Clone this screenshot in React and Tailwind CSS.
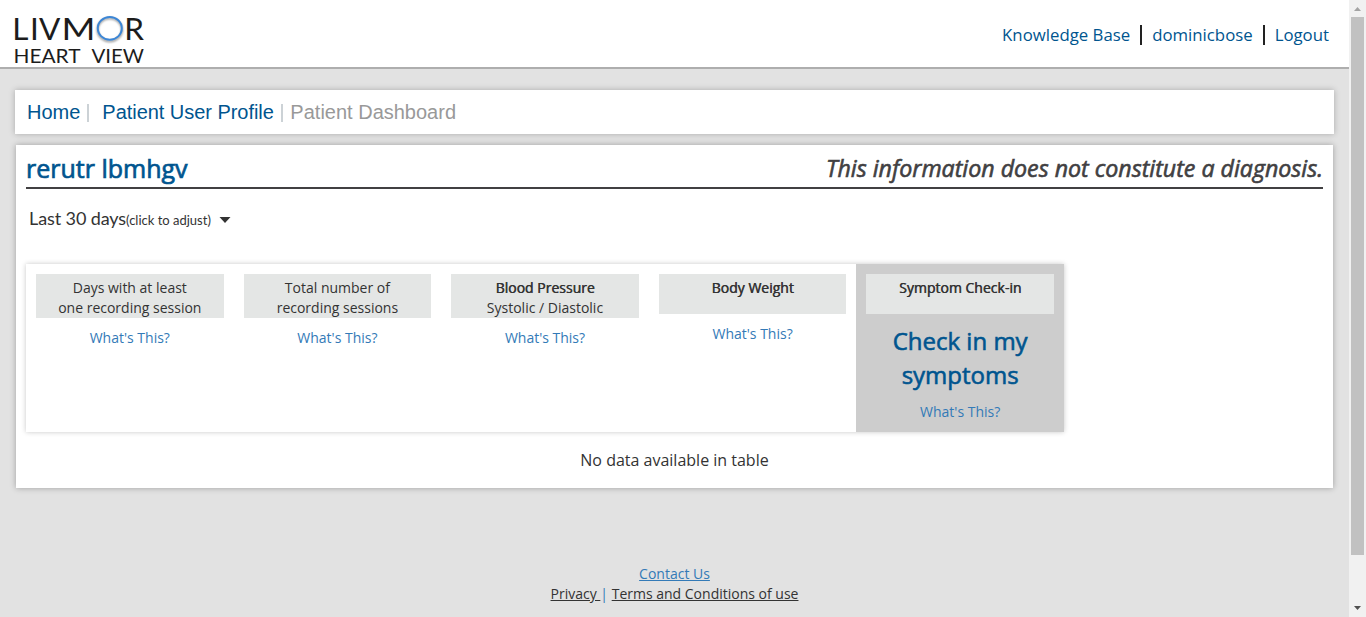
const columns = [
  { lines: ['Days with at least', 'one recording session'] },
  { lines: ['Total number of', 'recording sessions'] },
  { title: 'Blood Pressure', lines: ['Systolic / Diastolic'] },
  { title: 'Body Weight', lines: [], short: true },
  { title: 'Symptom Check-in', lines: [], short: true, action: true },
];

function Logo() {
  return (
    <svg width="140" height="67" viewBox="12 0 140 67" role="img" aria-label="Livmor Heart View">
      <defs>
        <filter id="soft" x="-20%" y="-20%" width="140%" height="140%">
          <feGaussianBlur stdDeviation="0.8" />
        </filter>
      </defs>
      <g fill="#1c1c1c" fontFamily="Lato, sans-serif">
        <text x="12.300 29.900 39" y="40.300" fontSize="31.500">LIV</text>
        <text x="61.500" y="40.300" fontSize="31.500" textLength="34" lengthAdjust="spacingAndGlyphs">M</text>
        <text x="124.300" y="40.300" fontSize="31.500">R</text>
        <text x="13.500" y="63" fontSize="19.500" textLength="67" lengthAdjust="spacingAndGlyphs">HEART</text>
        <text x="91.500" y="63" fontSize="19.500" textLength="52.500" lengthAdjust="spacingAndGlyphs">VIEW</text>
      </g>
      <ellipse cx="109.800" cy="29.800" rx="12.200" ry="11.500" fill="none" stroke="#888" strokeWidth="1.8" filter="url(#soft)" />
      <ellipse cx="109.800" cy="28.300" rx="12" ry="11.400" fill="none" stroke="#3b86d6" strokeWidth="2" />
    </svg>
  );
}

function Column({ title, lines, short, action }) {
  return (
    <div className={action ? 'flex-1 bg-[#cdcdcd] p-[10px]' : 'flex-1 p-[10px]'}>
      <div className={short ? 'h-10 bg-[#e4e6e5] pt-1' : 'h-11 bg-[#e4e6e5] pt-1'}>
        {title && <div className="[text-shadow:0.5px_0_0_#333]">{title}</div>}
        {lines.map((l) => (
          <div key={l}>{l}</div>
        ))}
      </div>
      {action && (
        <div className="mt-[10px] text-2xl leading-[34px] text-[#00558f] [-webkit-text-stroke:0.6px_#00558f]">
          Check in my
          <br />
          symptoms
        </div>
      )}
      <a className="mt-[10px] block text-[#337ab7]">What's This?</a>
    </div>
  );
}

export default function App() {
  return (
    <div className="flex h-[617px] w-[1366px] overflow-hidden bg-[#e2e2e2] font-['Open_Sans',sans-serif] text-sm leading-5 text-[#333]">
      <div className="w-[1349px]">
        <header className="flex h-[69px] justify-between border-b-2 border-[#aeaeae] bg-white pr-5 pl-3">
          <Logo />
          <nav className="flex pt-[25px] text-[16.8px] leading-5 text-[#00558f]">
            <a className="mr-[10px]">Knowledge Base</a>
            <a className="h-5 border-l-2 border-[#222] pr-[10px] pl-[10px]">dominicbose</a>
            <a className="h-5 border-l-2 border-[#222] pl-[10px]">Logout</a>
          </nav>
        </header>

        <nav className="mt-[21px] ml-[15px] flex h-11 w-[1319px] items-center bg-white pl-3 font-['Liberation_Sans',sans-serif] text-xl leading-5 text-[#00558f] shadow-[0_0_6px_rgba(0,0,0,0.25)]">
          <a>Home</a>
          <span className="mt-0.5 mr-3 ml-[7px] h-[18px] w-0.5 bg-[#ccd2d6]" />
          <a className="ml-px tracking-[-0.04px]">Patient User Profile</a>
          <span className="mt-0.5 mr-[7.5px] ml-[7px] h-[18px] w-0.5 bg-[#ccd2d6]" />
          <span className="text-[#999]">Patient Dashboard</span>
        </nav>

        <main className="mt-[11px] ml-4 h-[343px] w-[1317px] bg-white px-[10px] shadow-[0_0_6px_rgba(0,0,0,0.3)]">
          <div className="flex h-11 justify-between border-b-2 border-[#414042]">
            <h1 className="pt-[7px] text-[25px] leading-8 text-[#00558f] [-webkit-text-stroke:0.7px_#00558f]">rerutr lbmhgv</h1>
            <div className="pt-2 text-[23.2px] leading-[30px] text-[#414042] italic [-webkit-text-stroke:0.6px_#414042]">
              This information does not constitute a diagnosis.
            </div>
          </div>
          <div className="flex h-[75px] items-baseline pt-[17px] pl-[3px] font-[Lato,sans-serif]">
            <span className="text-lg leading-6 tracking-[-0.1px]">Last 30 days</span>
            <span className="text-[13px]">(click to adjust)</span>
            <svg className="ml-[8px] self-start pt-[11px]" width="12" height="17" viewBox="0 0 12 6">
              <path d="M0.5 0H11.5L6 6Z" fill="#333" />
            </svg>
          </div>
          <section className="flex h-[168px] w-[1038px] text-center shadow-[0_0_5px_rgba(0,0,0,0.22)]">
            {columns.map((c) => (
              <Column key={c.title || c.lines[0]} {...c} />
            ))}
          </section>
          <p className="pt-[18px] text-center text-base leading-5">No data available in table</p>
        </main>

        <footer className="mt-[76px] text-center">
          <a className="text-[#337ab7] underline">Contact Us</a>
          <div className="text-[#337ab7]">
            <a className="whitespace-pre text-[#333] underline">Privacy </a>
            {'| '}
            <a className="text-[#333] underline">Terms and Conditions of use</a>
          </div>
        </footer>
      </div>

      <aside className="flex w-[17px] flex-col items-center bg-[#f1f1f1]">
        <svg width="17" height="17" viewBox="0 0 17 17">
          <path d="M5 11H12L8.500 7Z" fill="#a3a3a3" />
        </svg>
        <div className="h-[538px] w-[13px] bg-[#c1c1c1]" />
        <svg className="mt-11" width="17" height="17" viewBox="0 0 17 17">
          <path d="M5 7H12L8.500 11Z" fill="#505050" />
        </svg>
      </aside>
    </div>
  );
}
